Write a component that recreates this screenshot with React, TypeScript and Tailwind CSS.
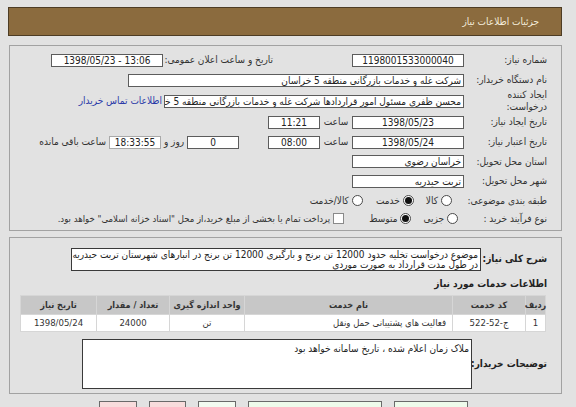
import React from 'react';

const FONT = "font-['DejaVu_Sans_Condensed','DejaVu_Sans',sans-serif]";

function Field({ className = '', children }: { className?: string; children?: React.ReactNode }) {
  return (
    <div
      className={`h-[13px] shrink-0 overflow-hidden whitespace-nowrap border border-[#5c5c5c] bg-white px-[2px] text-[10px] leading-[11px] text-[#222] ${className}`}
    >
      {children}
    </div>
  );
}

function Radio({ checked }: { checked?: boolean }) {
  return (
    <span className="flex h-[11px] w-[11px] shrink-0 items-center justify-center rounded-full border border-[#4a4a4a] bg-white">
      {checked && <span className="h-[7px] w-[7px] rounded-full bg-[#111]" />}
    </span>
  );
}

function Label({ children, className = '' }: { children: React.ReactNode; className?: string }) {
  return <div className={`w-[83px] shrink-0 whitespace-nowrap text-[#333] ${className}`}>{children}</div>;
}

const COLS = 'grid grid-cols-[19px_72px_207px_74px_72px_75px] gap-px';

export default function App() {
  return (
    <div
      dir="rtl"
      className={`${FONT} h-[407px] w-[576px] overflow-hidden bg-[#e2e2e2] pl-[8px] pr-[14px] pt-[7px] text-[10px] leading-[12px]`}
    >
      {/* title bar */}
      <div className="flex h-[29px] items-center border border-[#4d3c24] bg-[#8b6b3e] pr-[22px] text-[10px] text-[#f4eddc]">
        جزئیات اطلاعات نیاز
      </div>

      {/* main details */}
      <div className="ml-[1px] mt-[9px] border border-[#a2a2a2] pb-[3px] pr-[14px] pt-[4px]">
        <div className="flex h-[20px] items-center">
          <Label>شماره نیاز:</Label>
          <Field className="w-[112px] text-center">1198001533000040</Field>
          <div className="w-[79px] shrink-0" />
          <div className="w-[110px] shrink-0 whitespace-nowrap text-[#333]">تاریخ و ساعت اعلان عمومی:</div>
          <Field className="w-[112px] text-center">
            <span dir="ltr">1398/05/23 - 13:06</span>
          </Field>
        </div>

        <div className="flex h-[20px] items-center">
          <Label>نام دستگاه خریدار:</Label>
          <Field className="w-[336px]">شرکت غله و خدمات بازرگانی منطقه 5 خراسان</Field>
        </div>

        <div className="flex h-[22px] items-center">
          <Label className="leading-[12px]">
            ایجاد کننده
            <br />
            درخواست:
          </Label>
          <Field className="w-[300px]">محسن ظفری مسئول امور قراردادها شرکت غله و خدمات بازرگانی منطقه 5 خر</Field>
          <div className="mr-[2px] whitespace-nowrap text-[#2b3aa8]">اطلاعات تماس خریدار</div>
        </div>

        <div className="flex h-[20px] items-center">
          <Label>تاریخ ایجاد نیاز:</Label>
          <Field className="w-[112px] text-center">1398/05/23</Field>
          <div className="w-[32px] shrink-0 text-center text-[#333]">ساعت</div>
          <Field className="w-[52px] text-center">11:21</Field>
        </div>

        <div className="flex h-[20px] items-center">
          <Label>تاریخ اعتبار نیاز:</Label>
          <Field className="w-[112px] text-center">1398/05/24</Field>
          <div className="w-[32px] shrink-0 text-center text-[#333]">ساعت</div>
          <Field className="w-[52px] text-center">08:00</Field>
          <div className="w-[29px] shrink-0" />
          <Field className="w-[52px] text-center">0</Field>
          <div className="w-[26px] shrink-0 text-center text-[#333]">روز و</div>
          <Field className="w-[52px] border-[#a9a9a9] bg-[#efeecb] text-center text-[#8a8a55]">18:33:55</Field>
          <div className="mr-[3px] whitespace-nowrap text-[#333]">ساعت باقی مانده</div>
        </div>

        <div className="flex h-[19px] items-center">
          <Label>استان محل تحویل:</Label>
          <Field className="w-[112px]">خراسان رضوی</Field>
        </div>

        <div className="flex h-[20px] items-center">
          <Label>شهر محل تحویل:</Label>
          <Field className="w-[112px]">تربت حیدریه</Field>
        </div>

        <div className="flex h-[19px] items-center text-[#333]">
          <Label>طبقه بندی موضوعی:</Label>
          <div className="w-[12px] shrink-0" />
          <Radio />
          <span className="mr-[3px]">کالا</span>
          <span className="mr-[12px]" />
          <Radio checked />
          <span className="mr-[3px]">خدمت</span>
          <span className="mr-[13px]" />
          <Radio />
          <span className="mr-[3px]">کالا/خدمت</span>
        </div>

        <div className="flex h-[17px] items-center text-[#333]">
          <Label>نوع فرآیند خرید :</Label>
          <div className="w-[6px] shrink-0" />
          <Radio />
          <span className="mr-[3px]">جزیی</span>
          <span className="mr-[12px]" />
          <Radio checked />
          <span className="mr-[3px]">متوسط</span>
          <span className="mr-[25px]" />
          <span className="h-[11px] w-[11px] shrink-0 border border-[#8a8a8a] bg-white" />
          <span className="mr-[3px] whitespace-nowrap text-[9.5px]">
            {'پرداخت تمام یا بخشی از مبلغ خرید،از محل "اسناد خزانه اسلامی" خواهد بود.'}
          </span>
        </div>
      </div>

      {/* description and services */}
      <div className="ml-[1px] mt-[6px] border border-[#a2a2a2] pb-[4px] pr-[14px] pt-[9px]">
        <div className="flex h-[24px] items-center">
          <div className="w-[66px] shrink-0 whitespace-nowrap font-bold text-[#222]">شرح کلی نیاز:</div>
          <div className="h-[23px] w-[410px] shrink-0 overflow-hidden border border-[#3a3a3a] bg-white pr-[2px] pt-[1px] text-[10px] leading-[10px] text-[#222]">
            <div className="whitespace-nowrap">
              موضوع درخواست تخلیه حدود 12000  تن برنج و بارگیری 12000 تن برنج در انبارهای شهرستان تربت حیدریه
            </div>
            <div className="whitespace-nowrap">در طول مدت قرارداد به صورت موردی</div>
          </div>
        </div>

        <div className="mt-[5px] flex h-[16px] items-center font-bold text-[#222]">اطلاعات خدمات مورد نیاز</div>

        <div className="mr-[1px] mt-[3px] w-[526px] bg-[#d6d6d6] p-px text-[9px]">
          <div className={`${COLS} h-[18px] whitespace-nowrap font-bold text-[#333]`}>
            <div className="flex items-center justify-center bg-[#c7c7c7]">ردیف</div>
            <div className="flex items-center justify-center bg-[#c7c7c7]">کد خدمت</div>
            <div className="flex items-center justify-center bg-[#c7c7c7]">نام خدمت</div>
            <div className="flex items-center justify-center bg-[#c7c7c7]">واحد اندازه گیری</div>
            <div className="flex items-center justify-center bg-[#c7c7c7]">تعداد / مقدار</div>
            <div className="flex items-center justify-center bg-[#c7c7c7]">تاریخ نیاز</div>
          </div>
          <div className={`${COLS} mt-px h-[16px] whitespace-nowrap text-[9.5px] text-[#333]`}>
            <div className="flex items-center justify-center bg-white">1</div>
            <div className="flex items-center justify-center bg-white">ج-52-522</div>
            <div className="flex items-center bg-white pr-[6px]">فعالیت های پشتیبانی حمل ونقل</div>
            <div className="flex items-center justify-center bg-white">تن</div>
            <div className="flex items-center justify-center bg-white">24000</div>
            <div className="flex items-center justify-center bg-white">1398/05/24</div>
          </div>
        </div>

        <div className="mt-[7px] flex h-[50px] items-center">
          <div className="w-[75px] shrink-0 whitespace-nowrap font-bold text-[#222]">توضیحات خریدار:</div>
          <div className="h-[50px] w-[390px] shrink-0 border border-[#3a3a3a] bg-white pr-[2px] pt-[3px] text-[10px] leading-[11px] text-[#222]">
            ملاک زمان اعلام شده ، تاریخ سامانه خواهد بود
          </div>
        </div>
      </div>

      {/* action buttons, cut off by the window */}
      <div dir="ltr" className="ml-[91px] mt-[7px] flex gap-[12px]">
        <div className="h-[20px] w-[38px] border border-[#6a6a6a] bg-[#f8dcdc]" />
        <div className="h-[20px] w-[37px] border border-[#6a6a6a] bg-[#f8dcdc]" />
        <div className="h-[20px] w-[38px] border border-[#6a6a6a] bg-[#f3fbf1]" />
        <div className="h-[20px] w-[134px] border border-[#6a6a6a] bg-[#eefbeb]" />
        <div className="h-[20px] w-[74px] border border-[#6a6a6a] bg-[#eefbeb]" />
      </div>
    </div>
  );
}
